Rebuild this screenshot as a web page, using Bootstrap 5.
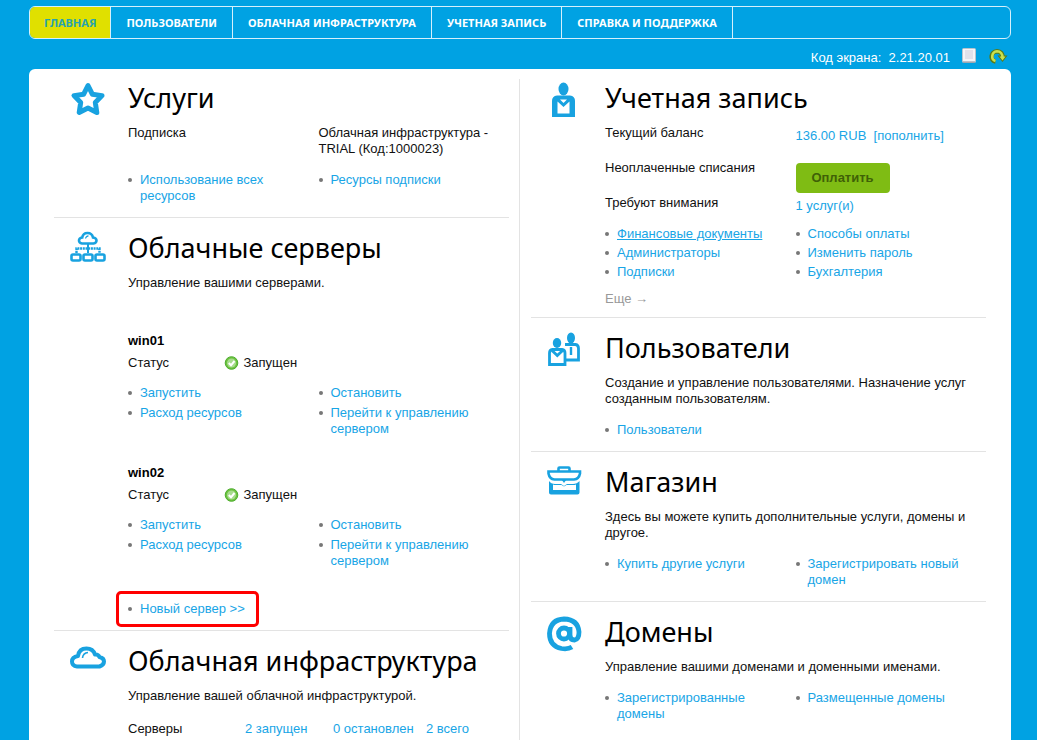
<!DOCTYPE html>
<html lang="ru">
<head>
<meta charset="utf-8">
<meta name="viewport" content="width=device-width, initial-scale=1">
<title>Панель управления</title>
<link rel="stylesheet" href="https://cdn.jsdelivr.net/npm/bootstrap@5.3.0/dist/css/bootstrap.min.css">
<style>
  :root { --sky: #00a2e3; --ink: #18a2e0; }
  body { background: var(--sky); color: #111; font: 13px/16px "Liberation Sans", Arial, sans-serif; }
  a { color: #18a5e6; text-decoration: none; }
  a:hover, a.current { text-decoration: underline; }
  .page { padding: 6px 26px 0 29px; }
  .top-menu { border: 1px solid #d5f0fc; border-radius: 6px; overflow: hidden; }
  .top-menu .nav-link { color: #fff; font: bold 11px/31px "Noto Sans", sans-serif; text-transform: uppercase; padding: 0 15px; border-right: 1px solid #d5f0fc; border-radius: 0; white-space: nowrap; }
  .top-menu .nav-link.active { background: #e0e000; color: #27a3ae; padding: 0 14px; }
  .screen-bar { height: 30px; color: #fff; padding: 8px 3px 0 0; }
  .icon-btn { border: 0; background: none; padding: 0 0 4px; margin-left: 9px; line-height: 0; }
  .panel { background: #fff; border-radius: 6px 6px 0 0; padding: 0 25px; min-height: calc(100vh - 69px); }
  .split { width: 1px; background: #e3e3e3; margin: 10px 11px 0 10px; }
  .col-half { flex: 1 1 0; min-width: 0; }
  .block { padding: 12px 0 13px; border-bottom: 1px solid #e3e3e3; }
  .block:first-child { padding-top: 11px; }
  .block:last-child { border-bottom: 0; }
  .block-icon { flex: none; width: 74px; padding: 1px 0 0 16px; }
  .block-body { flex: 1 1 0; min-width: 0; }
  .block-icon svg { display: block; fill: none; stroke: var(--ink); }
  h2 { font: 27px/36px "Noto Sans", sans-serif; color: #000; margin: 0 0 9px; white-space: nowrap; }
  h3 { font: bold 13px/16px "Liberation Sans", Arial, sans-serif; margin: 0 0 6px; color: #000; }
  .pair { display: grid; grid-template-columns: 1fr 1fr; }
  .money { grid-template-rows: 35px 35px 31px; }
  .money dd { padding-top: 3px; }
  dl, dt, dd, .links { margin: 0; font-weight: normal; }
  .links { list-style: none; padding: 0; display: flex; flex-direction: column; gap: 4px; }
  .links li { display: flex; padding-right: 20px; }
  .links li::before { content: ""; flex: none; width: 4px; height: 4px; border-radius: 50%; background: #777; margin: 6px 8px 0 0; }
  .tight .links { gap: 3px; }
  .pair-links { margin-top: 15px; }
  .server { margin-top: 28px; }
  .server:first-of-type { margin-top: 42px; }
  .server .pair-links { margin-top: 14px; }
  .state { margin-left: -95px; }
  .new-server { border: 3px solid #f00; border-radius: 5px; padding: 7px 11px 7px 9px; margin: 22px 0 -10px -12px; display: inline-flex; }
  .new-server li { padding-right: 0; }
  .pay { display: block; border: 0; border-radius: 4px; background: #7fbc14; color: #3f6107; font-weight: bold; width: 94px; height: 30px; }
  .more { color: #999; margin: 11px 0 -3px; }
  .totals { display: grid; grid-template-columns: 117px 88px 93px auto; margin-top: 17px; }
</style>
</head>
<body>
<div class="page">
  <nav class="top-menu nav">
    <a class="nav-link active" href="#">Главная</a>
    <a class="nav-link" href="#">Пользователи</a>
    <a class="nav-link" href="#">Облачная инфраструктура</a>
    <a class="nav-link" href="#">Учетная запись</a>
    <a class="nav-link" href="#">Справка и поддержка</a>
  </nav>
  <div class="screen-bar d-flex justify-content-end align-items-center">
    <span>Код экрана:&nbsp; 2.21.20.01</span>
    <button class="icon-btn" aria-label="Страница"><svg width="20" height="18" viewBox="0 0 20 18"><rect x="3.500" y="1.500" width="13" height="14" rx="1" fill="#f4f4f7" stroke="#b9c2cc"/><rect x="6" y="3" width="8" height="9" fill="#e1e1ea"/><path d="M4 15h12" stroke="#858c98"/></svg></button>
    <button class="icon-btn" aria-label="Обновить"><svg width="20" height="18" viewBox="0 0 20 18"><path d="M7.500 14.500C1.500 13.500 2.500 4.500 9 4.200C13 4.200 14.500 7 14.500 10" fill="none" stroke="#5b7a14" stroke-width="4.400"/><path d="M9.500 8.500h10l-5 6.500z" fill="#5b7a14"/><path d="M7.500 14C2.500 12.500 3.500 4.700 9 4.200C12.500 4.200 14.500 7 14.500 10.500" fill="none" stroke="#c9e04e" stroke-width="2.600"/><path d="M11.500 9.500h6l-3 4z" fill="#c9e04e"/></svg></button>
  </div>
  <main class="panel d-flex">
    <div class="col-half">
      <section class="block d-flex">
        <div class="block-icon"><svg width="36" height="36" viewBox="0 0 36 36"><path d="M18 4.500l4.300 8.700 9.700 1.400-6.700 6.800 1.500 10.100L18 27.100 9.200 31.500l1.500-10.100L4 14.600l9.700-1.400z" stroke-width="5" stroke-linejoin="round"/></svg></div>
        <div class="block-body">
          <h2>Услуги</h2>
          <dl class="pair"><dt>Подписка</dt><dd>Облачная инфраструктура - TRIAL (Код:1000023)</dd></dl>
          <div class="pair pair-links">
            <ul class="links"><li><a href="#">Использование всех ресурсов</a></li></ul>
            <ul class="links"><li><a href="#">Ресурсы подписки</a></li></ul>
          </div>
        </div>
      </section>
      <section class="block d-flex">
        <div class="block-icon"><svg width="36" height="34" viewBox="0 0 36 34"><path d="M12 12.500q-3-.5-3-3T12.200 6.500Q13 2 17.500 2q4.500 0 5.500 4.500 3.500.5 3.500 3t-3 3z" stroke-width="2.600"/><path d="M15.500 7.500q.5-2.500 3-2.700" stroke-width="1.200"/><path d="M18 13v9" stroke-width="2"/><path d="M6.500 22v-4.500H29.500V22" stroke-width="2.400" stroke-dasharray="2 .7"/><rect x="1.500" y="23.500" width="9" height="6" rx="1.500" stroke-width="2.600"/><rect x="13.500" y="23.500" width="9" height="6" rx="1.500" stroke-width="2.600"/><rect x="25.500" y="23.500" width="9" height="6" rx="1.500" stroke-width="2.600"/></svg></div>
        <div class="block-body">
          <h2>Облачные серверы</h2>
          <p class="m-0">Управление вашими серверами.</p>
          <article class="server">
            <h3>win01</h3>
            <dl class="pair"><dt>Статус</dt><dd class="state d-flex"><svg class="me-1" width="16" height="16" viewBox="0 0 16 16"><circle cx="7.500" cy="8" r="6.300" fill="#6cc23e" stroke="#4fae30"/><circle cx="7.500" cy="8" r="4.500" fill="#a7dc8d"/><path d="M4.800 8l2.200 2.300 3.500-4.300" fill="none" stroke="#fff" stroke-width="2"/></svg>Запущен</dd></dl>
            <div class="pair pair-links">
              <ul class="links"><li><a href="#">Запустить</a></li><li><a href="#">Расход ресурсов</a></li></ul>
              <ul class="links"><li><a href="#">Остановить</a></li><li><a href="#">Перейти к управлению сервером</a></li></ul>
            </div>
          </article>
          <article class="server">
            <h3>win02</h3>
            <dl class="pair"><dt>Статус</dt><dd class="state d-flex"><svg class="me-1" width="16" height="16" viewBox="0 0 16 16"><circle cx="7.500" cy="8" r="6.300" fill="#6cc23e" stroke="#4fae30"/><circle cx="7.500" cy="8" r="4.500" fill="#a7dc8d"/><path d="M4.800 8l2.200 2.300 3.500-4.300" fill="none" stroke="#fff" stroke-width="2"/></svg>Запущен</dd></dl>
            <div class="pair pair-links">
              <ul class="links"><li><a href="#">Запустить</a></li><li><a href="#">Расход ресурсов</a></li></ul>
              <ul class="links"><li><a href="#">Остановить</a></li><li><a href="#">Перейти к управлению сервером</a></li></ul>
            </div>
          </article>
          <ul class="links new-server"><li><a href="#">Новый сервер &gt;&gt;</a></li></ul>
        </div>
      </section>
      <section class="block d-flex">
        <div class="block-icon"><svg width="36" height="28" viewBox="0 0 36 28"><path d="M7 22.500Q2 22 2 17.500T8 12Q9 4.500 16.500 4.500 23 4.500 25 10.500 28 10 29.500 13 34 14 34 17.500T29.500 22.500z" stroke-width="4" stroke-linejoin="round"/><path d="M12.500 14q.5-5 5.500-5.500" stroke-width="1.600"/></svg></div>
        <div class="block-body">
          <h2>Облачная инфраструктура</h2>
          <p class="m-0">Управление вашей облачной инфраструктурой.</p>
          <dl class="totals"><dt>Серверы</dt><dd><a href="#">2 запущен</a></dd><dd><a href="#">0 остановлен</a></dd><dd><a href="#">2 всего</a></dd></dl>
        </div>
      </section>
    </div>
    <div class="split"></div>
    <div class="col-half">
      <section class="block d-flex">
        <div class="block-icon"><svg width="36" height="36" viewBox="0 0 36 36"><ellipse cx="16.500" cy="8" rx="5" ry="6.500" fill="#18a2e0" stroke="none"/><path d="M5 36V20q0-5 5-5.500h13q5 .5 5 5.500v16z" fill="#18a2e0" stroke="none"/><path d="M10.500 32.500V20.500l6 5.500 6-5.500v12z" fill="#fff" stroke="none"/><path d="M13 18.500h7l-3.500 3.500z" fill="#fff" stroke="none"/></svg></div>
        <div class="block-body">
          <h2>Учетная запись</h2>
          <dl class="pair money">
            <dt>Текущий баланс</dt><dd><a href="#">136.00 RUB</a>&nbsp; <a href="#">[пополнить]</a></dd>
            <dt>Неоплаченные списания</dt><dd><button class="pay">Оплатить</button></dd>
            <dt>Требуют внимания</dt><dd><a href="#">1 услуг(и)</a></dd>
          </dl>
          <div class="pair tight">
            <ul class="links"><li><a class="current" href="#">Финансовые документы</a></li><li><a href="#">Администраторы</a></li><li><a href="#">Подписки</a></li></ul>
            <ul class="links"><li><a href="#">Способы оплаты</a></li><li><a href="#">Изменить пароль</a></li><li><a href="#">Бухгалтерия</a></li></ul>
          </div>
          <a class="more d-block" href="#">Еще <span aria-hidden="true">→</span></a>
        </div>
      </section>
      <section class="block d-flex">
        <div class="block-icon"><svg width="36" height="38" viewBox="0 0 36 38"><ellipse cx="24" cy="7" rx="4" ry="5.500" fill="#18a2e0" stroke="none"/><path d="M18 13.500h10.500q3 .5 3 4v11.500H19" stroke-width="2.800"/><path d="M24 16v8" stroke-width="2.400"/><ellipse cx="10" cy="12" rx="4.200" ry="5" fill="#18a2e0" stroke="none"/><path d="M2.500 33.500V22q0-3 3-3.500h9.500q3 .5 3 3.500v11.500z" fill="#fff" stroke-width="2.800"/><path d="M5 19.500l5.300 5 5.300-5" stroke-width="2.800"/></svg></div>
        <div class="block-body">
          <h2>Пользователи</h2>
          <p class="m-0">Создание и управление пользователями. Назначение услуг созданным пользователям.</p>
          <ul class="links pair-links"><li><a href="#">Пользователи</a></li></ul>
        </div>
      </section>
      <section class="block d-flex">
        <div class="block-icon"><svg width="36" height="32" viewBox="0 0 36 32"><path d="M11.500 6V3.500q0-1 1-1h9q1 0 1 1V6" stroke-width="2.600"/><path d="M1.500 6.500h31.500v2q-1 5.500-6 6H7.500Q2.500 14 1.500 8.500z" stroke-width="2.600"/><path d="M2 16q2 3 6 3h6l3 2 3-2h6q4 0 6.500-3v11.500q0 2-2 2H4q-2 0-2-2z" fill="#18a2e0" stroke="none"/><path d="M14.500 14.500h5l-2.500 3.500z" fill="#18a2e0" stroke="none"/><path d="M6 25v-5.500q1 .5 3 .5h5.500l2.500 1.500 2.500-1.500H26q2 0 3-.5V25z" fill="#fff" stroke="none"/></svg></div>
        <div class="block-body">
          <h2>Магазин</h2>
          <p class="m-0">Здесь вы можете купить дополнительные услуги, домены и другое.</p>
          <div class="pair pair-links">
            <ul class="links"><li><a href="#">Купить другие услуги</a></li></ul>
            <ul class="links"><li><a href="#">Зарегистрировать новый домен</a></li></ul>
          </div>
        </div>
      </section>
      <section class="block d-flex">
        <div class="block-icon"><svg width="36" height="38" viewBox="0 0 36 38"><path d="M25 32Q21 34.500 14.500 33.500 2.500 31 2.500 18.500 3.500 4.500 17 4q14 .5 15 13 0 7.500-4.500 8-4.500 0-4.500-5V12" stroke-width="4.800"/><ellipse cx="17" cy="18.500" rx="5.500" ry="5.500" stroke-width="4.800"/></svg></div>
        <div class="block-body">
          <h2>Домены</h2>
          <p class="m-0">Управление вашими доменами и доменными именами.</p>
          <div class="pair pair-links">
            <ul class="links"><li><a href="#">Зарегистрированные домены</a></li></ul>
            <ul class="links"><li><a href="#">Размещенные домены</a></li></ul>
          </div>
        </div>
      </section>
    </div>
  </main>
</div>
<script src="https://cdn.jsdelivr.net/npm/bootstrap@5.3.0/dist/js/bootstrap.bundle.min.js"></script>
</body>
</html>
